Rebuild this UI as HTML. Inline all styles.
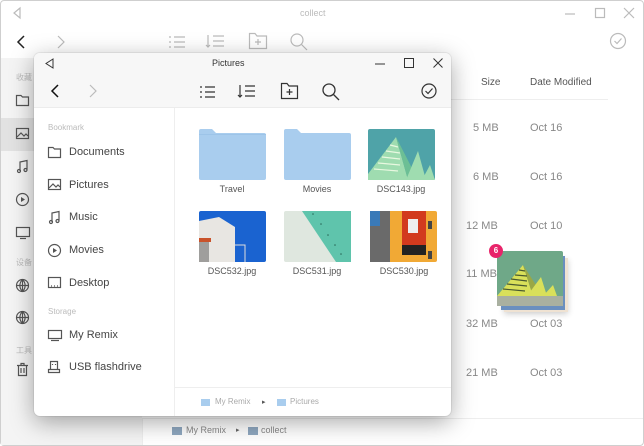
<!DOCTYPE html>
<html><head><meta charset="utf-8"><style>
*{margin:0;padding:0;box-sizing:border-box}
body{width:644px;height:446px;overflow:hidden;background:#fff;font-family:"Liberation Sans","Noto Sans CJK SC",sans-serif;position:relative}
.a{position:absolute}
.bg{left:0;top:0;width:644px;height:446px;border:1px solid #cfcfcf;border-radius:4px;background:#fff}
.t{font-size:11px;color:#555}
.g{color:#aaa}
svg{position:absolute;overflow:visible}
.s{fill:none;stroke:#555;stroke-width:1.2}
.sl{fill:none;stroke:#bbb;stroke-width:1.2}
.fw{left:34px;top:53px;width:417px;height:363px;background:#fff;border-radius:6px;box-shadow:0 6px 24px rgba(0,0,0,.35),0 0 0 1px rgba(0,0,0,.06);overflow:hidden}
.lbl{font-size:9px;color:#555;text-align:center;width:80px}
.side{font-size:11px;color:#444}
</style></head><body>
<div class="a bg"></div>
<!-- background window -->
<div class="a" style="left:1px;top:58px;width:141px;height:387px;background:#f4f4f4"></div>
<div class="a" style="left:1px;top:118px;width:141px;height:33px;background:#e2e2e2"></div>
<div class="a t g" style="left:300px;top:8px;font-size:9px;color:#bbb">collect</div>
<svg style="left:12px;top:7px" width="10" height="12"><path class="sl" d="M8 1L2 6L8 11Z"/></svg>
<svg style="left:565px;top:13px" width="10" height="2"><path class="sl" d="M0 1H10"/></svg>
<svg style="left:595px;top:8px" width="10" height="10"><rect class="sl" x="0.5" y="0.5" width="9" height="9"/></svg>
<svg style="left:624px;top:8px" width="10" height="10"><path class="sl" d="M0 0L10 10M10 0L0 10"/></svg>
<svg style="left:16px;top:35px" width="10" height="14"><path fill="none" stroke="#222" stroke-width="1.5" d="M8 1L2 7L8 13"/></svg>
<svg style="left:56px;top:35px" width="10" height="14"><path class="sl" d="M2 1L8 7L2 13"/></svg>
<svg style="left:169px;top:36px" width="16" height="12"><path class="sl" d="M0 1H2M0 6H2M0 11H2M5 1H16M5 6H16M5 11H16"/></svg>
<svg style="left:206px;top:34px" width="18" height="14"><path class="sl" d="M2 1V13M0 11L2 13L4 11M7 2H18M7 7H18M7 12H18"/></svg>
<svg style="left:249px;top:33px" width="18" height="16"><path class="sl" d="M0.5 15.5V0.5H6L8 3H17.5V15.5ZM9 6V12M6 9H12"/></svg>
<svg style="left:290px;top:33px" width="18" height="18"><circle class="sl" cx="7" cy="7" r="6"/><path class="sl" d="M11.5 11.5L17 17"/></svg>
<svg style="left:610px;top:33px" width="16" height="16"><circle class="sl" cx="8" cy="8" r="7.5"/><path class="sl" d="M4.5 8L7 10.5L11.5 5.5"/></svg>
<div class="a" style="left:16px;top:72px;font-size:8px;color:#bbb">收藏</div>
<div class="a" style="left:16px;top:257px;font-size:8px;color:#bbb">设备</div>
<div class="a" style="left:16px;top:345px;font-size:8px;color:#bbb">工具</div>
<svg style="left:16px;top:95px" width="13" height="11"><path class="s" d="M0.5 10.5V0.5H5L6.5 2H12.5V10.5Z"/></svg>
<svg style="left:16px;top:128px" width="13" height="11"><rect class="s" x="0.5" y="0.5" width="12" height="10"/><path class="s" d="M1 9L5 5L8 8L10 6L12 8"/></svg>
<svg style="left:17px;top:160px" width="11" height="13"><path class="s" d="M3 11V2L10 0.5V9.5"/><circle class="s" cx="2" cy="11" r="1.5"/><circle class="s" cx="8.5" cy="10" r="1.5"/></svg>
<svg style="left:16px;top:193px" width="13" height="13"><circle class="s" cx="6.5" cy="6.5" r="6"/><path fill="#555" d="M5 4L9 6.5L5 9Z"/></svg>
<svg style="left:16px;top:227px" width="14" height="12"><rect class="s" x="0.5" y="0.5" width="13" height="9"/><path class="s" d="M4 11.5H10"/></svg>
<svg style="left:16px;top:279px" width="13" height="13"><circle class="s" cx="6.5" cy="6.5" r="6"/><path class="s" d="M0.5 6.5H12.5M6.5 0.5V12.5M6.5 0.5C3 4 3 9 6.5 12.5M6.5 0.5C10 4 10 9 6.5 12.5"/></svg>
<svg style="left:16px;top:311px" width="13" height="13"><circle class="s" cx="6.5" cy="6.5" r="6"/><path class="s" d="M0.5 6.5H12.5M6.5 0.5V12.5M6.5 0.5C3 4 3 9 6.5 12.5M6.5 0.5C10 4 10 9 6.5 12.5"/></svg>
<svg style="left:17px;top:363px" width="11" height="13"><path class="s" d="M0 2.5H11M4 2.5V0.5H7V2.5M1.5 2.5V12.5H9.5V2.5M4 5V10M7 5V10"/></svg>
<div class="a" style="left:450px;top:99px;width:158px;height:1px;background:#eee"></div>
<div class="a t" style="left:481px;top:77px;font-size:10px">Size</div>
<div class="a t" style="left:530px;top:77px;font-size:10px">Date Modified</div>
<div class="a t" style="left:473px;top:122px;color:#888">5 MB</div><div class="a t" style="left:530px;top:122px;color:#888">Oct 16</div>
<div class="a t" style="left:473px;top:171px;color:#888">6 MB</div><div class="a t" style="left:530px;top:171px;color:#888">Oct 16</div>
<div class="a t" style="left:466px;top:220px;color:#888">12 MB</div><div class="a t" style="left:530px;top:220px;color:#888">Oct 10</div>
<div class="a t" style="left:466px;top:268px;color:#888">11 MB</div>
<div class="a t" style="left:466px;top:318px;color:#888">32 MB</div><div class="a t" style="left:530px;top:318px;color:#888">Oct 03</div>
<div class="a t" style="left:466px;top:367px;color:#888">21 MB</div><div class="a t" style="left:530px;top:367px;color:#888">Oct 03</div>
<div class="a" style="left:142px;top:418px;width:501px;height:1px;background:#eee"></div>
<div class="a" style="left:142px;top:419px;width:1px;height:26px;background:#eee"></div>
<div class="a" style="left:172px;top:427px;width:10px;height:8px;background:#8fa8c0"></div>
<div class="a t" style="left:186px;top:425px;font-size:9px;color:#888">My Remix</div>
<div class="a" style="left:236px;top:426px;font-size:7px;color:#666">▸</div>
<div class="a" style="left:248px;top:427px;width:10px;height:8px;background:#8fa8c0"></div>
<div class="a t" style="left:261px;top:425px;font-size:9px;color:#888">collect</div>
<!-- drag preview -->
<div class="a" style="left:504px;top:258px;width:64px;height:54px;background:#efe2d2;box-shadow:0 2px 6px rgba(0,0,0,.2)"></div>
<div class="a" style="left:501px;top:256px;width:64px;height:54px;background:#6a8fbf"></div>
<svg style="left:497px;top:251px" width="66" height="55"><rect width="66" height="55" rx="2" fill="#6fa888"/><path fill="#d9e05a" d="M0 45L26 14L36 45Z"/><path fill="#9aa845" d="M26 14L36 45L46 45Z"/><path fill="#d9e05a" d="M30 45L44 26L50 45Z"/><path fill="#d9e05a" d="M46 45L56 34L60 45Z"/><path stroke="#4a5a30" stroke-width="1.2" d="M6 38L28 40M10 33L30 35M14 28L30 30M18 24L30 25M22 19L28 20"/><rect y="45" width="66" height="10" fill="#a9b0a0"/></svg>
<div class="a" style="left:489px;top:244px;width:14px;height:14px;border-radius:7px;background:#e8246a;color:#fff;font-size:8px;font-weight:bold;text-align:center;line-height:14px">6</div>
<!-- front window -->
<div class="a fw">
 <div class="a" style="left:0;top:0;width:417px;height:55px;background:#f7f7f7;border-bottom:1px solid #ececec"></div>
 <svg style="left:11px;top:5px" width="9" height="11"><path fill="none" stroke="#333" stroke-width="1" d="M8 1L1 5.5L8 10Z"/></svg>
 <div class="a" style="left:178px;top:5px;font-size:9px;color:#333">Pictures</div>
 <svg style="left:341px;top:10px" width="10" height="2"><path fill="none" stroke="#333" d="M0 1H10"/></svg>
 <svg style="left:370px;top:5px" width="10" height="10"><rect fill="none" stroke="#333" x="0.5" y="0.5" width="9" height="9"/></svg>
 <svg style="left:399px;top:5px" width="10" height="10"><path fill="none" stroke="#333" d="M0.5 0.5L9.5 9.5M9.5 0.5L0.5 9.5"/></svg>
 <svg style="left:16px;top:31px" width="9" height="14"><path fill="none" stroke="#111" stroke-width="1.5" d="M8 1L2 7L8 13"/></svg>
 <svg style="left:54px;top:31px" width="9" height="14"><path class="sl" d="M2 1L8 7L2 13"/></svg>
 <svg style="left:166px;top:33px" width="16" height="12"><path fill="none" stroke="#333" stroke-width="1.2" d="M0 1H2M0 6H2M0 11H2M5 1H15M5 6H15M5 11H15"/></svg>
 <svg style="left:204px;top:31px" width="18" height="15"><path fill="none" stroke="#333" stroke-width="1.2" d="M2 1V13M0 11L2 13L4 11M7 2H17M7 7H17M7 12H17"/></svg>
 <svg style="left:247px;top:30px" width="18" height="16"><path fill="none" stroke="#333" stroke-width="1.2" d="M0.5 15.5V0.5H6L8 3H16.5V15.5ZM8.5 6V12M5.5 9H11.5"/></svg>
 <svg style="left:288px;top:30px" width="18" height="18"><circle fill="none" stroke="#333" stroke-width="1.3" cx="7" cy="7" r="6"/><path fill="none" stroke="#333" stroke-width="1.3" d="M11.5 11.5L17 17"/></svg>
 <svg style="left:387px;top:30px" width="16" height="16"><circle fill="none" stroke="#333" stroke-width="1.2" cx="8" cy="8" r="7"/><path fill="none" stroke="#333" stroke-width="1.2" d="M4.5 8L7 10.5L11.5 5.5"/></svg>
 <div class="a" style="left:140px;top:55px;width:1px;height:308px;background:#eee"></div>
 <div class="a" style="left:14px;top:70px;font-size:8px;color:#bbb">Bookmark</div>
 <div class="a" style="left:14px;top:254px;font-size:8px;color:#bbb">Storage</div>
 <svg style="left:14px;top:94px" width="13" height="11"><path class="s" d="M0.5 10.5V0.5H5L6.5 2H12.5V10.5Z"/></svg><div class="a side" style="left:35px;top:93px">Documents</div>
 <svg style="left:14px;top:126px" width="13" height="11"><rect class="s" x="0.5" y="0.5" width="12" height="10"/><path class="s" d="M1 9L5 5L8 8L10 6L12 8"/></svg><div class="a side" style="left:35px;top:126px">Pictures</div>
 <svg style="left:15px;top:158px" width="11" height="13"><path class="s" d="M3 11V2L10 0.5V9.5"/><circle class="s" cx="2" cy="11" r="1.5"/><circle class="s" cx="8.5" cy="10" r="1.5"/></svg><div class="a side" style="left:35px;top:158px">Music</div>
 <svg style="left:14px;top:191px" width="13" height="13"><circle class="s" cx="6.5" cy="6.5" r="6"/><path fill="#555" d="M5 4L9 6.5L5 9Z"/></svg><div class="a side" style="left:35px;top:191px">Movies</div>
 <svg style="left:14px;top:224px" width="13" height="12"><rect class="s" x="0.5" y="0.5" width="12" height="10"/><path class="s" d="M3 9H4M6 9H7M9 9H10"/></svg><div class="a side" style="left:35px;top:224px">Desktop</div>
 <svg style="left:14px;top:277px" width="14" height="11"><rect class="s" x="0.5" y="0.5" width="13" height="8"/><path class="s" d="M3 10.5H11"/></svg><div class="a side" style="left:35px;top:276px">My Remix</div>
 <svg style="left:14px;top:308px" width="12" height="13"><path class="s" d="M2.5 0.5H9.5V8.5H2.5ZM0.5 8.5H11.5V11.5H0.5ZM4.5 3V4M7.5 3V4"/></svg><div class="a side" style="left:35px;top:308px">USB flashdrive</div>
 <!-- grid -->
 <svg style="left:165px;top:76px" width="67" height="51"><path fill="#a9cdee" d="M2 0H13L17 4H65A2 2 0 0 1 67 6V49A2 2 0 0 1 65 51H2A2 2 0 0 1 0 49V2A2 2 0 0 1 2 0Z"/><path fill="#9dc4e8" d="M0 5H67V6H0Z"/></svg>
 <div class="a lbl" style="left:158px;top:131px">Travel</div>
 <svg style="left:250px;top:76px" width="67" height="51"><path fill="#a9cdee" d="M2 0H13L17 4H65A2 2 0 0 1 67 6V49A2 2 0 0 1 65 51H2A2 2 0 0 1 0 49V2A2 2 0 0 1 2 0Z"/></svg>
 <div class="a lbl" style="left:243px;top:131px">Movies</div>
 <svg style="left:334px;top:76px" width="67" height="51"><rect width="67" height="51" rx="2" fill="#4fa3a8"/><path fill="#9fdcb0" d="M0 45L28 8L40 51H0Z"/><path fill="#6cbf95" d="M28 8L40 51H50Z"/><path fill="#9fdcb0" d="M38 51L50 22L58 51Z"/><path fill="#9fdcb0" d="M54 51L62 36L67 51Z"/><path stroke="#e8f8e0" stroke-width="1.2" d="M6 40L30 42M10 34L32 36M14 28L32 30M18 22L32 24M22 16L30 18"/></svg>
 <div class="a lbl" style="left:327px;top:131px">DSC143.jpg</div>
 <svg style="left:165px;top:158px" width="67" height="51"><rect width="67" height="51" rx="2" fill="#1a63d0"/><path fill="#e8e6e2" d="M0 10L20 6L36 16V51H0Z"/><path fill="#c9532b" d="M0 27H12V31H0Z"/><path fill="#555" d="M0 31H10V51H0Z" opacity=".5"/><path fill="none" stroke="#ddd" d="M36 34H46V51"/></svg>
 <div class="a lbl" style="left:158px;top:213px">DSC532.jpg</div>
 <svg style="left:250px;top:158px" width="67" height="51"><rect width="67" height="51" rx="2" fill="#dfe7df"/><path fill="#5fc4ac" d="M18 0H67V51H52Z"/><g fill="#2a6a5a"><circle cx="29" cy="3" r=".8"/><circle cx="37" cy="13" r=".8"/><circle cx="44" cy="24" r=".8"/><circle cx="51" cy="34" r=".8"/><circle cx="57" cy="43" r=".8"/></g></svg>
 <div class="a lbl" style="left:243px;top:213px">DSC531.jpg</div>
 <svg style="left:336px;top:158px" width="67" height="51"><rect width="67" height="51" rx="2" fill="#f1a935"/><rect width="20" height="51" fill="#6a6a6a"/><rect width="10" height="15" fill="#3a7ab8"/><rect x="32" y="0" width="24" height="34" fill="#d23a1e"/><rect x="32" y="34" width="24" height="10" fill="#222"/><rect x="38" y="8" width="10" height="14" fill="#eee"/><rect x="58" y="10" width="4" height="8" fill="#444"/><rect x="58" y="40" width="4" height="8" fill="#444"/></svg>
 <div class="a lbl" style="left:330px;top:213px">DSC530.jpg</div>
 <div class="a" style="left:141px;top:334px;width:276px;height:1px;background:#eee"></div>
 <div class="a" style="left:167px;top:346px;width:9px;height:7px;background:#a9cdee"></div>
 <div class="a" style="left:181px;top:344px;font-size:8px;color:#aaa">My Remix</div>
 <div class="a" style="left:228px;top:345px;font-size:7px;color:#555">▸</div>
 <div class="a" style="left:243px;top:346px;width:9px;height:7px;background:#a9cdee"></div>
 <div class="a" style="left:256px;top:344px;font-size:8px;color:#aaa">Pictures</div>
</div>
</body></html>
